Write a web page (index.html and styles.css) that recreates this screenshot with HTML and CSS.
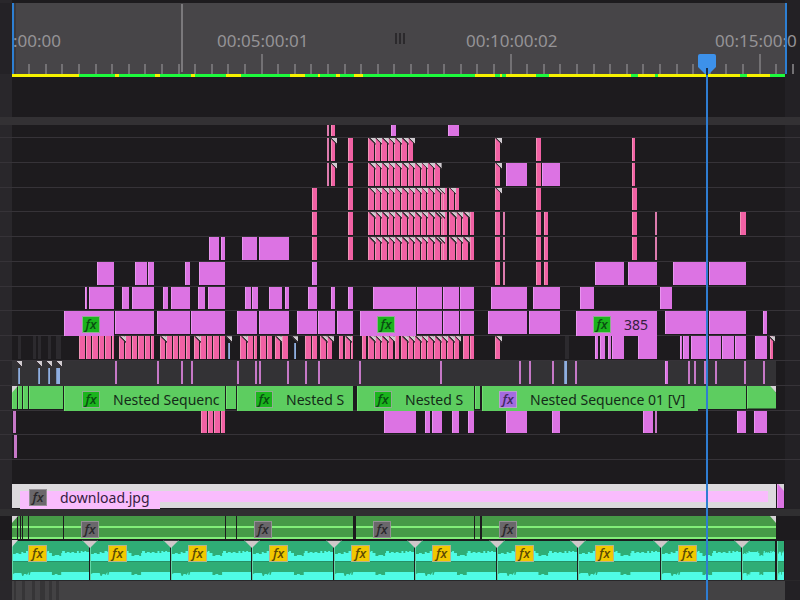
FILE: index.html
```html
<!DOCTYPE html>
<html lang="en">
<head>
<meta charset="utf-8">
<meta name="viewport" content="width=device-width, initial-scale=1">
<title>Timeline</title>
<link rel="stylesheet" href="styles.css">
</head>
<body>
<main class="timeline">
  <header class="ruler" id="ruler"></header>
  <div class="render-bar" id="render"></div>
  <div class="spacer"></div>
  <div class="divider"></div>
  <section class="video" id="video" aria-label="Video tracks"></section>
  <div class="divider divider-thin"></div>
  <section class="audio" id="audio" aria-label="Audio tracks"></section>
  <div class="footer"><div class="footer-fill" id="footer"></div></div>
  <div class="playhead">
    <svg class="playhead-grip" viewBox="0 0 20 21" aria-hidden="true"><path d="M1 2Q1 0 3 0H17Q19 0 19 2V13L12 20H8L1 13Z" fill="#3d91ea"/><path d="M10 14V21" stroke="#152e4e" stroke-width="2"/></svg>
  </div>
</main>
<script src="timeline.js"></script>
</body>
</html>
```

FILE: styles.css
```css
* { box-sizing: border-box; }
body {
  margin: 0;
  background: #1d1b1e;
  font-family: "Noto Sans", "Open Sans", sans-serif;
}
.timeline {
  position: relative;
  display: flex;
  flex-direction: column;
  min-height: 100vh;
  overflow: hidden;
  padding-top: 3px;
  background: linear-gradient(90deg, #29272b 1.5%, #1d1b1e 1.5%, #1d1b1e 98.1%, #232125 98.1%);
}

/* Ruler */
.ruler {
  position: relative;
  height: 71px;
  overflow: hidden;
  background: linear-gradient(90deg, #242226 1.5%, #3b393c 1.5%, #3b393c 2%, #474548 2%, #474548 98.25%, #232125 98.25%);
}
.tick {
  position: absolute;
  bottom: 0;
  width: 2px;
  height: 10px;
  background: #737174;
}
.tick-major { height: 20px; }
.tick-tall { height: 68px; bottom: 2px; background: #7b797c; }
.time {
  position: absolute;
  top: 26px;
  color: #959396;
  font-size: 17px;
  line-height: 24px;
  white-space: nowrap;
}
.edge {
  position: absolute;
  top: 0;
  bottom: 0;
  width: 2px;
  background: #2d7fd3;
}
.grip {
  position: absolute;
  top: 30px;
  width: 10px;
  height: 11px;
  border: solid #2b292c;
  border-width: 0 2px;
}
.grip::after {
  content: "";
  position: absolute;
  left: 2px;
  width: 2px;
  height: 11px;
  background: #2b292c;
}
.render-bar { position: relative; height: 3px; }
.render-part { position: absolute; top: 0; bottom: 0; background: #1dfb3d; }
.render-part.yellow { background: #f6f200; }
.spacer { height: 40px; }
.divider { height: 8px; background: #333134; }
.divider-thin { height: 7px; background: #302f31; }

/* Tracks */
.video { flex: 1; display: flex; flex-direction: column; }
.track {
  position: relative;
  flex: 1 1 20px;
  border-top: 1px solid #363338;
}
.track-short { flex: 0 0 12px; border-top: 0; }
.track-still { flex: 0 0 25px; border-top: 0; }
.clip {
  position: absolute;
  top: 0;
  bottom: 1px;
  background: #dc73e3;
  border-left: 1px solid #e896ee;
}
.pink { background: #f161a4; border-left-color: #f093b6; }
.thin { background: #dc7bae; border-left-color: #dc7bae; }
.line { background: #c678c7; border-left-color: #c678c7; }
.blue { background: #8faee0; border-left-color: #7993bb; }
.blue.corner { top: 7px; }
.blue.corner::after { top: -7px; }
.shade { background: #2c2a2e; border-left: 0; }
.adjust { background: #333235; border-left: 0; bottom: 0; }
.green { background: #5dcd60; border-left-color: #72df72; }
.green.end { clip-path: polygon(0 0, 82% 0, 100% 30%, 100% 100%, 0 100%); }
.titled { bottom: -1px; z-index: 1; }
.corner::after {
  content: "";
  position: absolute;
  z-index: 1;
  top: 0;
  right: -2px;
  width: 7px;
  height: 7px;
  background: linear-gradient(45deg, #3a3338 58%, #cfcacf 64%);
  clip-path: polygon(0 0, 100% 0, 100% 100%);
}
.notch {
  position: absolute;
  top: 0;
  z-index: 2;
  width: 6px;
  height: 7px;
  background: #d6d2d6;
  clip-path: polygon(0 0, 100% 0, 0 100%);
}
.notch-right { clip-path: polygon(0 0, 100% 0, 100% 100%); }

.fx {
  position: absolute;
  z-index: 3;
  top: 5px;
  width: 18px;
  height: 17px;
  border: 1px solid #8fae90;
  background: #1bb41d;
  color: #0a4c12;
  font: italic 600 13px/14px "Open Sans", "Noto Sans", sans-serif;
  text-align: center;
}
.fx-purple { background: #a46be0; color: #40295f; border-color: #b8a1cc; }
.fx-grey { background: #6a676b; color: #29272a; border-color: #949095; }
.fx-yellow { background: #f1c800; color: #5c4a05; border-color: #b8b38c; width: 19px; }
.name {
  position: absolute;
  z-index: 3;
  top: 4px;
  color: #142b18;
  font-size: 14px;
  line-height: 20px;
  white-space: nowrap;
}
.name-dark { color: #35203e; }

.still { background: #dcdadd; border: 0; bottom: 1px; }
.still-fill { position: absolute; top: 7px; height: 11px; background: #f9bcfd; }
.still-title { height: 18px; }

/* Audio */
.audio-green { position: relative; height: 24px; background: #1d1b1e; }
.audio-green .clip {
  border-left: 0;
  background: linear-gradient(#469a47 10px, #82ee79 10px, #82ee79 12px, #469a47 12px, #469a47 21px, #82ee79 21px);
}
.audio-teal {
  position: relative;
  height: 41px;
  border-bottom: 1px solid #29272a;
}
.audio-teal .clip {
  top: 1px;
  bottom: 0;
  background: #2fad76;
  border-left: 1px solid #63d6a7;
}
.wave { display: block; width: 100%; height: 100%; }
.fade {
  position: absolute;
  top: 0;
  z-index: 2;
  width: 16px;
  height: 8px;
  margin-left: -8px;
  background: #d0c8ca;
  border-top: 1px solid #39363a;
  clip-path: polygon(0 0, 100% 0, 50% 100%);
}
.footer { height: 19px; }
.footer-fill { position: relative; height: 100%; margin: 0 1.9% 0 1.5%; background: #434244; }
.footer-fill .clip { background: #363537; border: 0; bottom: 0; }

.playhead {
  position: absolute;
  z-index: 5;
  top: 54px;
  bottom: 0;
  left: 88.25%;
  width: 2px;
  background: #2f7dd2;
}
.playhead-grip { position: absolute; top: 0; left: -9px; width: 20px; height: 21px; }
```

FILE: timeline.js
```js
// Horizontal positions are timeline units; the full view is 800 units wide.
const SPAN = 800;
const pct = (v) => (v / SPAN) * 100 + "%";

function add(parent, className, start, end, text) {
  const el = document.createElement("div");
  el.className = className;
  if (start !== undefined) el.style.left = pct(start);
  if (end !== undefined) el.style.width = pct(end - start);
  if (text) el.textContent = text;
  parent.appendChild(el);
  return el;
}

// Ruler
const ruler = document.getElementById("ruler");
for (let i = 1; i <= 47; i++) {
  add(ruler, i % 15 === 0 ? "tick tick-major" : "tick", 11.6 + i * 16.6);
}
add(ruler, "tick tick-tall", 181);
[[13, ":00:00"], [217, "00:05:00:01"], [466, "00:10:00:02"], [715, "00:15:00:0"]]
  .forEach(([x, t]) => add(ruler, "time", x, undefined, t));
add(ruler, "edge", 12);
add(ruler, "edge", 785);
add(ruler, "grip", 395);

// Render state, alternating yellow and green
const stops = [12, 79, 115, 119, 155, 160, 191, 195, 226, 241, 290, 305, 318, 320, 336, 340,
  354, 363, 475, 495, 500, 502, 506, 536, 549, 631, 638, 655, 658, 740, 747, 770, 785];
const yellowStarts = new Set([12, 115, 155, 191, 226, 290, 318, 336, 354, 475, 500, 506, 549, 638, 658, 747]);
for (let i = 0; i < stops.length - 1; i++) {
  add(document.getElementById("render"), "render-part" + (yellowStarts.has(stops[i]) ? " yellow" : ""), stops[i], stops[i + 1]);
}

// v violet, p pink, P pink with corner, t thin, l line, b blue, B blue with corner,
// s run of pink slices, S the same with corners, h shade, g green
const kinds = {
  v: "clip", p: "clip pink", P: "clip pink corner", t: "clip thin", l: "clip line",
  b: "clip blue", B: "clip blue corner", h: "clip shade", g: "clip green",
  G: "clip green end", V: "clip titled", T: "clip green titled", a: "clip adjust"
};
const STEP = 6.6;

function fill(track, spec) {
  spec.trim().split(/\s+/).filter(Boolean).forEach((item) => {
    const [a, b] = item.slice(1).split("-").map(Number);
    const kind = item[0];
    if (kind === "s" || kind === "S") {
      for (let x = a; x < b - 1; x += STEP) {
        add(track, kinds[kind === "S" ? "P" : "p"], x, Math.min(x + STEP - 1, b));
      }
    } else {
      add(track, kinds[kind], a, b);
    }
  });
}

const tracks = [
  "t327-329 p331-335 v391-396 v448-459",
  "t327-329 P331-335 p348-353 S368-415 P495-500 p536-541 p632-635",
  "t327-329 P331-335 p348-353 S368-441 P495-500 v506-527 p536-541 v542-560 p632-635",
  "p312-317 p348-353 S368-443 p443-447 P449-454 p455-459 P495-500 p536-541 p632-637",
  "p312-317 p348-353 S368-443 p443-447 S449-468 p470-474 p495-500 t503-505 p536-541 p544-548 p632-637 t655-657 p740-746",
  "v209-219 v221-225 v242-257 v259-289 p312-317 p348-353 S368-443 p443-447 S449-468 p470-474 p495-500 t503-505 p536-541 p544-548 p632-637 t655-657",
  "v97-114 v135-147 v148-154 v185-190 v199-225 v312-317 p495-500 t503-505 p536-541 p544-548 v595-624 v628-657 v673-708 v709-746",
  "v85-87 v89-114 v122-129 v132-154 v163-168 v171-190 v198-205 v208-225 v245-251 v252-258 v269-282 v285-289 v308-317 v331-335 v348-353 v373-416 v417-442 v443-459 v460-474 v491-527 v533-560 v580-594 v660-672",
  "V64-114 v115-154 v157-190 v191-225 v237-257 v259-289 v297-317 v318-335 v337-353 V360-416 v417-442 v443-459 v460-474 v488-527 v529-560 V576-657 v665-708 v709-746 v763-767",
  "h18-21 h33-36 h38-41 h48-51 h56-61 s79-114 P119-124 s125-154 P160-165 s166-190 P194-199 s200-225 B228-230 P240-246 s247-257 s260-274 P275-280 s282-289 B294-296 s305-317 S320-332 p339-343 P345-350 p351-353 p362-366 S368-394 p395-399 S401-461 s463-474 P495-500 h565-569 v595-598 v600-605 v608-611 v612-624 v638-657 v680-682 v683-689 v691-708 v709-721 v722-734 v735-746 v755-767 P770-773",
  "a12-776 B18-20 B38-40 B48-50 B56-60 l115-117 l157-159 l181-183 l191-193 l237-239 l255-257 l259-261 l287-289 l305-307 l318-320 l359-361 l440-442 l519-521 l529-531 l552-554 b564-567 l575-577 v665-668 l688-690 l694-696 l704-706 l715-717 l744-746 l763-765",
  "g12-17 g18-22 g23-28 g29-63 T64-225 g226-236 T237-353 T357-474 g475-480 T482-698 g697-746 G747-776",
  "l13-16 s201-225 v384-416 v425-430 v432-442 v452-459 v468-474 v506-527 v552-560 v643-653 l655-657 v737-746 v754-767",
  "l14-17",
  ""
];
const titles = {
  8: [[82, "fx", ""], [377, "fx", ""], [593, "fx", "385", "name name-dark"]],
  11: [[82, "fx", "Nested Sequenc"], [255, "fx", "Nested S"], [374, "fx", "Nested S"], [499, "fx fx-purple", "Nested Sequence 01 [V]"]]
};

const video = document.getElementById("video");
tracks.forEach((spec, i) => {
  const track = add(video, i ? "track" : "track track-short");
  fill(track, spec);
  (titles[i] || []).forEach(([x, cls, name, nameClass]) => {
    add(track, cls, x, undefined, "fx");
    if (name) add(track, nameClass || "name", x + 31, undefined, name);
  });
  if (i === 11) {
    add(track, "notch", 12);
    add(track, "notch notch-right", 770);
  }
});

const still = add(video, "track track-still");
add(still, "clip still", 12, 776);
add(still, "still-fill", 20, 768);
add(still, "still-fill still-title", 20, 160);
add(still, "fx fx-grey", 29, undefined, "fx");
add(still, "name name-dark", 60, undefined, "download.jpg");
add(still, "clip", 777, 784);
add(still, "notch notch-right", 778);

// Audio
const audio = document.getElementById("audio");
const a1 = add(audio, "audio-green");
[[12, 17], [18, 20], [21, 22], [23, 28], [29, 63], [64, 225], [226, 236], [237, 353], [356, 474], [475, 480], [482, 776]]
  .forEach(([s, e]) => add(a1, "clip", s, e));
[81, 254, 373, 499].forEach((x) => add(a1, "fx fx-grey", x, undefined, "fx"));
add(a1, "notch", 12);
add(a1, "notch notch-right", 770);

const WAVE = '<svg class="wave" viewBox="0 0 82 39" preserveAspectRatio="none" aria-hidden="true">' +
  '<path fill="#4ffce5" d="M0 13H3V12H6V13H9V11H11V12H14V10H17V11H37V10H39V12H42V15H45V14H50V15H52V12H53V10H56V12H58V11H61V12H63V11H66V12H69V10H71V12H73V10H75V11H77V10H79V11H82V20H0Z' +
  'M0 33L2 32H9L10 35H11L12 33H14L15 34L17 31V34H18L19 31H42V34H45V33H48V34H52V31H82V39H0Z"/>' +
  '<path stroke="#278f68" d="M0 20.5H82"/></svg>';
const cuts = [12, 90, 171, 252, 334, 415, 497, 578, 661, 742, 776];
const badges = [28, 108, 188, 269, 351, 432, 515, 595, 678];
const a2 = add(audio, "audio-teal");
cuts.slice(0, -1).forEach((s, i) => {
  add(a2, "clip", s, cuts[i + 1] - 1).innerHTML = WAVE;
  if (i) add(a2, "fade", s);
});
add(a2, "clip", 777, 784).innerHTML = WAVE;
add(a2, "notch", 12);
badges.forEach((x) => add(a2, "fx fx-yellow", x, undefined, "fx"));

const footer = document.getElementById("footer");
[[2, 4], [10, 13], [21, 24], [29, 34], [38, 41], [46, 49]].forEach(([s, e]) => add(footer, "clip", s, e));
```
